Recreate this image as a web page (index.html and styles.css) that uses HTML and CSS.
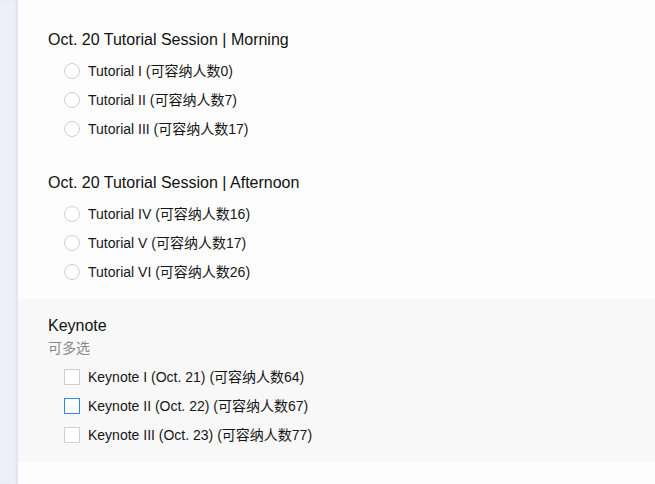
FILE: index.html
```html
<!DOCTYPE html>
<html lang="zh">
<head>
<meta charset="utf-8">
<link rel="stylesheet" href="styles.css">
</head>
<body>
<div class="page">
  <div class="side"></div>
  <main class="main">
    <section class="question">
      <div class="q-title">Oct. 20 Tutorial Session | Morning</div>
      <ul class="options">
        <li class="option"><span class="radio"></span><span class="label">Tutorial I (可容纳人数0)</span></li>
        <li class="option"><span class="radio"></span><span class="label">Tutorial II (可容纳人数7)</span></li>
        <li class="option"><span class="radio"></span><span class="label">Tutorial III (可容纳人数17)</span></li>
      </ul>
    </section>
    <section class="question">
      <div class="q-title">Oct. 20 Tutorial Session | Afternoon</div>
      <ul class="options">
        <li class="option"><span class="radio"></span><span class="label">Tutorial IV (可容纳人数16)</span></li>
        <li class="option"><span class="radio"></span><span class="label">Tutorial V (可容纳人数17)</span></li>
        <li class="option"><span class="radio"></span><span class="label">Tutorial VI (可容纳人数26)</span></li>
      </ul>
    </section>
    <section class="question active">
      <div class="q-title">Keynote</div>
      <div class="q-desc">可多选</div>
      <ul class="options">
        <li class="option"><span class="check"></span><span class="label">Keynote I (Oct. 21) (可容纳人数64)</span></li>
        <li class="option"><span class="check hover"></span><span class="label">Keynote II (Oct. 22) (可容纳人数67)</span></li>
        <li class="option"><span class="check"></span><span class="label">Keynote III (Oct. 23) (可容纳人数77)</span></li>
      </ul>
    </section>
  </main>
</div>
</body>
</html>
```
FILE: styles.css
```css
* { box-sizing: border-box; }
html, body {
  margin: 0;
  padding: 0;
  height: 100%;
  background: #ffffff;
  font-family: "Liberation Sans", Arial, "Noto Sans CJK SC", sans-serif;
  color: #111111;
}
.page {
  display: flex;
  min-height: 100%;
}
.side {
  width: 18px;
  flex: none;
  background: #edf0f9;
  box-shadow: inset -2px 0 2px rgba(180, 188, 215, 0.25);
}
.main {
  flex: 1;
  padding-top: 13px;
  background: #fdfdfd;
}
.question {
  padding: 15px 30px 13px;
}
.question.active {
  background: #f8f8f8;
}
.q-title {
  font-size: 16px;
  line-height: 24px;
  color: #111111;
}
.q-desc {
  font-size: 14px;
  line-height: 20px;
  color: #8a8a8a;
}
.options {
  list-style: none;
  margin: 4px 0 0;
  padding: 0 0 0 16px;
}
.option {
  display: flex;
  align-items: center;
  height: 29px;
  gap: 8px;
}
.radio {
  width: 16px;
  height: 16px;
  border: 1px solid #cfcfcf;
  border-radius: 50%;
  background: #fff;
  flex: none;
}
.check {
  width: 16px;
  height: 16px;
  border: 1px solid #cfcfcf;
  background: #fff;
  flex: none;
}
.check.hover {
  border-color: #2d8ceb;
}
.label {
  font-size: 14px;
  line-height: 18px;
  color: #161616;
}
```
